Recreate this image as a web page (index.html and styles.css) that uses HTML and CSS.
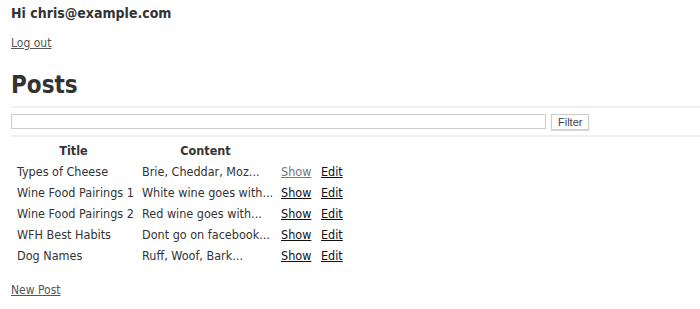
FILE: index.html
```html
<!DOCTYPE html>
<html lang="en">
<head>
<meta charset="UTF-8">
<meta name="viewport" content="width=device-width, initial-scale=1.0">
<title>Posts</title>
<link rel="stylesheet" href="styles.css">
</head>
<body>
    <div class="page">
        <p class="greeting">Hi chris@example.com</p>
        <p class="logout"><a class="plain-link" href="#">Log out</a></p>

        <h1 class="page-title">Posts</h1>
        <div class="filter-bar">
            <form class="filter-form" onsubmit="event.preventDefault()">
                <input type="text" class="filter-input">
                <button class="filter-button">Filter</button>
            </form>
        </div>

        <table class="posts">
            <tr>
                <th class="col-title">Title</th>
                <th class="col-content">Content</th>
                <th class="col-show"></th>
                <th class="col-edit"></th>
            </tr>
            <tr>
                <td>Types of Cheese</td>
                <td>Brie, Cheddar, Moz...</td>
                <td><a class="visited" href="#">Show</a></td>
                <td><a href="#">Edit</a></td>
            </tr>
            <tr>
                <td>Wine Food Pairings 1</td>
                <td>White wine goes with...</td>
                <td><a href="#">Show</a></td>
                <td><a href="#">Edit</a></td>
            </tr>
            <tr>
                <td>Wine Food Pairings 2</td>
                <td>Red wine goes with...</td>
                <td><a href="#">Show</a></td>
                <td><a href="#">Edit</a></td>
            </tr>
            <tr>
                <td>WFH Best Habits</td>
                <td>Dont go on facebook...</td>
                <td><a href="#">Show</a></td>
                <td><a href="#">Edit</a></td>
            </tr>
            <tr>
                <td>Dog Names</td>
                <td>Ruff, Woof, Bark...</td>
                <td><a href="#">Show</a></td>
                <td><a href="#">Edit</a></td>
            </tr>
        </table>

        <p class="new-post"><a class="plain-link" href="#">New Post</a></p>
    </div>
</body>
</html>
```

FILE: styles.css
```css
body{
    margin:0;
    font-family: "DejaVu Sans Condensed", "DejaVu Sans", Verdana, sans-serif;
    font-size:12px;
    line-height:14px;
    color:#333;
    background:#fff;
}
.page{
    padding:0 0 0 11px;
}
.greeting{
    margin:0;
    padding-top:5px;
    font-size:14px;
    font-weight:bold;
    line-height:17px;
}
.logout{
    margin:14px 0 0;
}
.plain-link{
    color:#555;
}
.page-title{
    margin:21px 0 0;
    font-size:24px;
    line-height:28px;
    color:#333;
}
.filter-bar{
    margin-top:7px;
    border-top:2px solid #f0f0f0;
    border-bottom:2px solid #f0f0f0;
    padding:6px 0 5px;
}
.filter-form{
    display:flex;
    gap:5px;
    align-items:flex-start;
}
.filter-input{
    width:535px;
    height:15px;
    box-sizing:border-box;
    margin:0;
    border:1px solid #ccc;
    padding:0 2px;
}
.filter-button{
    height:16px;
    margin:0;
    padding:0 6px;
    font-family: "Liberation Sans", Arial, sans-serif;
    font-size:11px;
    line-height:14px;
    color:#444;
    background:#fff;
    border:1px solid #ccc;
    box-shadow:0 1px 1px #ddd;
}
.posts{
    margin-top:3px;
    border-collapse:separate;
    border-spacing:0;
    font-size:12.5px;
}
.posts th,
.posts td{
    padding:0 0 0 6px;
    height:21px;
    white-space:nowrap;
    text-align:left;
}
.posts th{
    padding:0 3px;
    font-weight:bold;
    text-align:center;
}
.col-title{
    width:119px;
}
.col-content{
    width:133px;
}
.col-show{
    width:34px;
}
.col-edit{
    width:30px;
}
.posts a{
    color:#111;
}
.posts a.visited{
    color:#777;
}
.new-post{
    margin:17px 0 0;
}
```
